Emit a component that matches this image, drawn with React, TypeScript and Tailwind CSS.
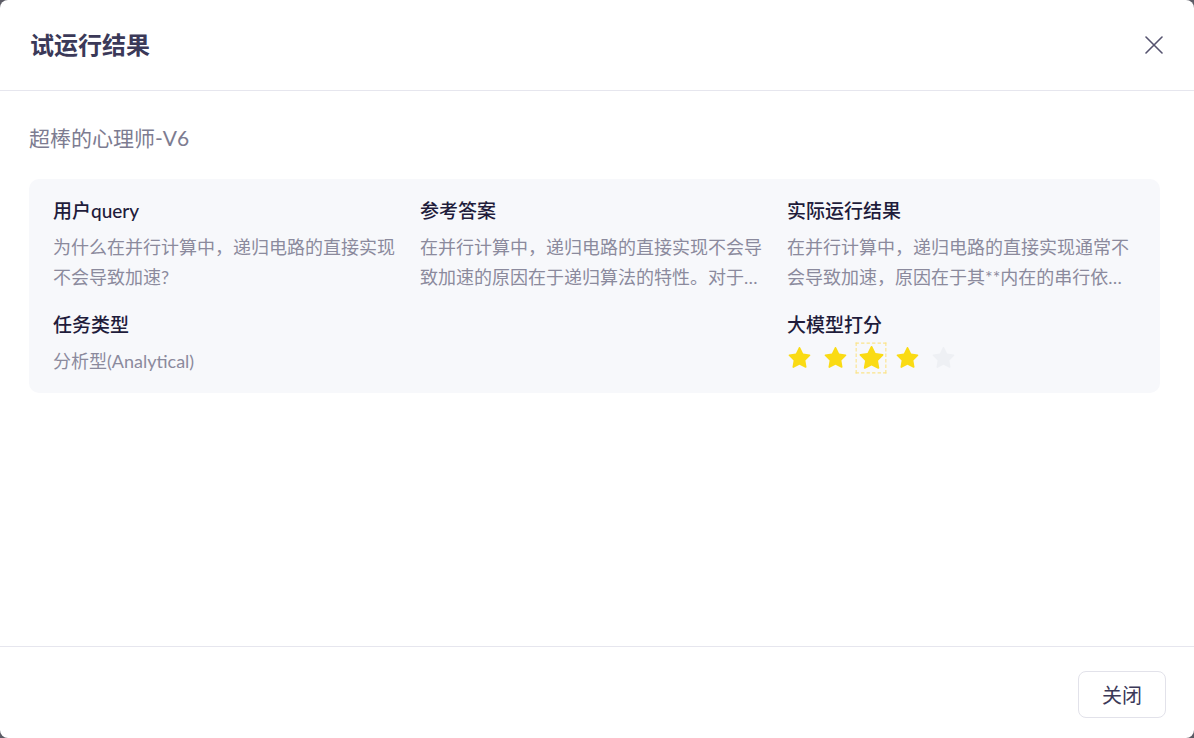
// 试运行结果 弹窗
const FONT = "font-['Lato','Noto_Sans_CJK_SC',sans-serif]";

const STAR_PATH =
  "M908.1 353.1l-253.9-36.9L540.7 86.1c-3.1-6.3-8.2-11.4-14.5-14.5-15.8-7.8-35-1.3-42.9 14.5L369.8 316.2l-253.9 36.9c-7 1-13.4 4.3-18.3 9.3a32.05 32.05 0 00.6 45.3l183.7 179.1-43.4 252.9a31.950 31.950 0 0046.4 33.7L512 754l227.1 119.4c6.2 3.3 13.4 4.4 20.3 3.2 17.4-3 29.1-19.5 26.1-36.9l-43.4-252.9 183.7-179.1c5-4.9 8.3-11.3 9.3-18.3 2.7-17.5-9.5-33.7-27-36.3z";

function Star({ filled, focused }: { filled: boolean; focused?: boolean }) {
  return (
    <span
      className={`flex h-[24px] w-[24px] items-center justify-center ${
        focused ? "scale-110 outline outline-1 outline-dashed outline-[#fbe38a] outline-offset-[1px]" : ""
      }`}
    >
      <svg viewBox="64 64 896 896" width="23" height="23" fill={filled ? "#fadb14" : "#eef0f4"}>
        <path d={STAR_PATH} />
      </svg>
    </span>
  );
}

function Field({ label, children }: { label: string; children: React.ReactNode }) {
  return (
    <div className="min-w-0">
      <div className="text-[19px] leading-[28px] font-medium text-[#1f1c3b]">{label}</div>
      <div className="mt-[7px]">{children}</div>
    </div>
  );
}

const clamp2 = "text-[18px] leading-[30px] text-[#8b8a9d] line-clamp-2";

export default function App() {
  const score = 4;
  return (
    <div className={`h-screen w-full bg-[#5c5c66] ${FONT}`}>
      <div className="flex h-full flex-col overflow-hidden rounded-[8px] bg-white">
        {/* 头部 */}
        <header className="flex h-[91px] shrink-0 items-center justify-between border-b border-[#e6e6ee] pl-[30px] pr-[30px]">
          <h2 className="text-[24px] font-semibold text-[#3b3958]">试运行结果</h2>
          <button className="flex h-[20px] w-[20px] items-center justify-center text-[#55536f]">
            <svg width="18" height="18" viewBox="0 0 18 18" fill="none" stroke="currentColor" strokeWidth="1.6" strokeLinecap="round">
              <path d="M1 1L17 17M17 1L1 17" />
            </svg>
          </button>
        </header>

        {/* 内容 */}
        <main className="flex-1 pl-[29px] pr-[34px] pt-[33px]">
          <div className="text-[21px] leading-[28px] text-[#7d7c91]">超棒的心理师-V6</div>

          <section className="mt-[27px] grid grid-cols-3 gap-x-[18px] gap-y-[19px] rounded-[10px] bg-[#f7f8fb] px-[24px] pt-[18px] pb-[17px]">
            <Field label="用户query">
              <p className={clamp2}>为什么在并行计算中，递归电路的直接实现不会导致加速?</p>
            </Field>
            <Field label="参考答案">
              <p className={clamp2}>
                在并行计算中，递归电路的直接实现不会导致加速的原因在于递归算法的特性。对于递归电路而言，每一层的计算都依赖上一层的结果。
              </p>
            </Field>
            <Field label="实际运行结果">
              <p className={clamp2}>
                在并行计算中，递归电路的直接实现通常不会导致加速，原因在于其**内在的串行依赖性**，每一步计算都需要等待前一步的结果。
              </p>
            </Field>

            <Field label="任务类型">
              <p className="text-[18px] leading-[30px] text-[#8b8a9d]">分析型(Analytical)</p>
            </Field>
            <div />
            <Field label="大模型打分">
              <div className="flex h-[30px] items-start gap-[12px]">
                {[1, 2, 3, 4, 5].map((i) => (
                  <Star key={i} filled={i <= score} focused={i === 3} />
                ))}
              </div>
            </Field>
          </section>
        </main>

        {/* 底部 */}
        <footer className="flex h-[92px] shrink-0 items-start justify-end border-t border-[#e6e6ee] pt-[24px] pr-[28px]">
          <button className="h-[47px] w-[88px] rounded-[8px] border border-[#e2e2ea] bg-white text-[20px] text-[#3b3958]">
            关闭
          </button>
        </footer>
      </div>
    </div>
  );
}
